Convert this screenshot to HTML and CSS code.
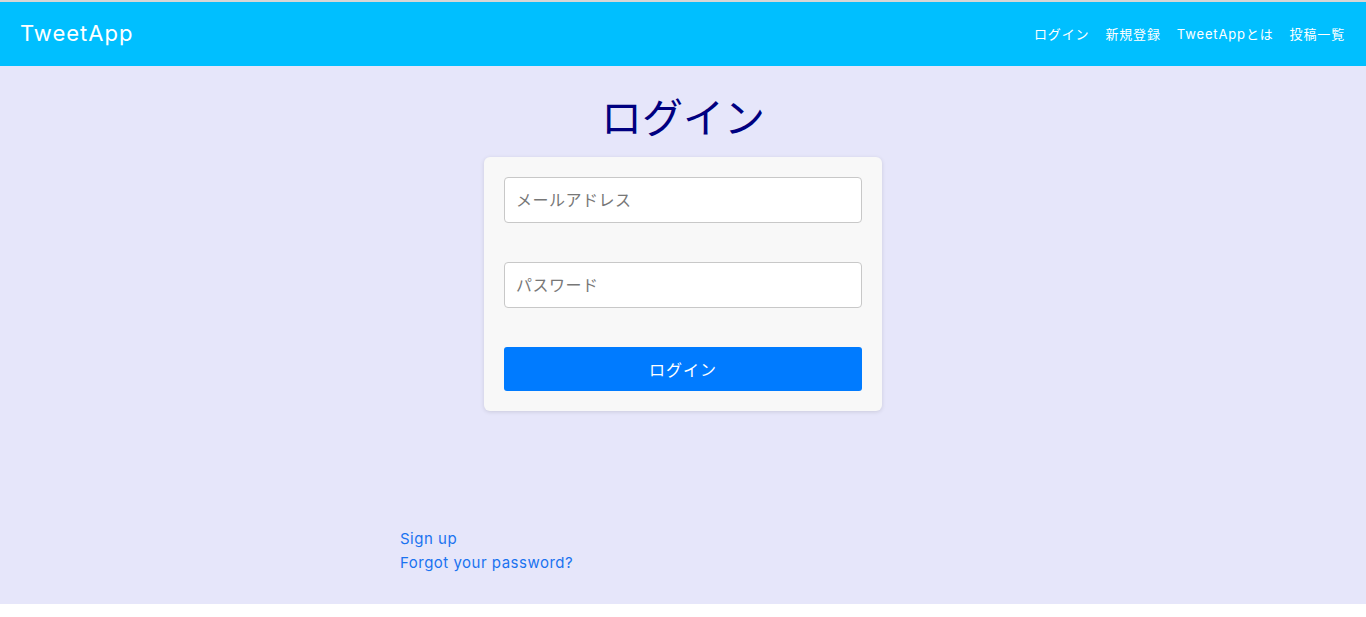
FILE: index.html
```html
<!DOCTYPE html>
<html lang="ja">
<head>
<meta charset="utf-8">
<title>TweetApp</title>
<link rel="stylesheet" href="styles.css">
</head>
<body>
<header class="header">
  <a class="logo" href="#">TweetApp</a>
  <nav class="nav">
    <a href="#">ログイン</a>
    <a href="#">新規登録</a>
    <a href="#">TweetAppとは</a>
    <a href="#">投稿一覧</a>
  </nav>
</header>
<main class="main">
  <h1 class="title">ログイン</h1>
  <form class="card">
    <input class="field" type="text" placeholder="メールアドレス">
    <input class="field" type="password" placeholder="パスワード">
    <button class="btn" type="button">ログイン</button>
  </form>
  <div class="links">
    <a href="#">Sign up</a>
    <a href="#">Forgot your password?</a>
  </div>
</main>
</body>
</html>
```

FILE: styles.css
```css
* { box-sizing: border-box; }
html, body { margin: 0; padding: 0; }
body {
  font-family: Inter, "Noto Sans CJK JP", sans-serif;
  background: #fff;
}
.header {
  border-top: 2px solid #d6d6d6;
  background: #00bfff;
  height: 66px;
  display: flex;
  align-items: center;
  justify-content: space-between;
  padding: 0 21px 2px 20px;
}
.logo {
  color: #fff;
  text-decoration: none;
  font-size: 22px;
  letter-spacing: 1px;
}
.nav {
  display: flex;
  gap: 16px;
}
.nav a {
  color: #fff;
  text-decoration: none;
  font-size: 13px;
  letter-spacing: 0.85px;
}
.main {
  background: #e6e6fa;
  height: 538px;
  padding-top: 44px;
  display: flex;
  flex-direction: column;
  align-items: center;
}
.title {
  margin: 0;
  color: #000080;
  font-size: 41px;
  font-weight: 400;
  line-height: 1;
  letter-spacing: 0;
  font-family: "Noto Sans CJK JP", sans-serif;
  margin-top: -15px;
}
.card {
  margin-top: 21px;
  width: 398px;
  background: #f8f8f8;
  border-radius: 6px;
  box-shadow: 0 1px 4px rgba(0,0,0,0.12);
  padding: 20px;
  display: flex;
  flex-direction: column;
}
.field {
  height: 46px;
  border: 1px solid #c8c8c8;
  border-radius: 4px;
  background: #fff;
  padding: 0 11px;
  font-size: 16px;
  font-family: Inter, "Noto Sans CJK JP", sans-serif;
  margin-bottom: 39px;
}
.field::placeholder { color: #777; letter-spacing: 0.5px; }
.btn {
  height: 44px;
  border: 0;
  border-radius: 3px;
  background: #007bff;
  color: #fff;
  font-size: 16px;
  font-family: Inter, "Noto Sans CJK JP", sans-serif;
  letter-spacing: 1px;
}
.links {
  width: 566px;
  margin-top: 116px;
  display: flex;
  flex-direction: column;
}
.links a {
  color: #1a73f0;
  text-decoration: none;
  font-size: 15px;
  letter-spacing: 0.5px;
  line-height: 24px;
}
```
